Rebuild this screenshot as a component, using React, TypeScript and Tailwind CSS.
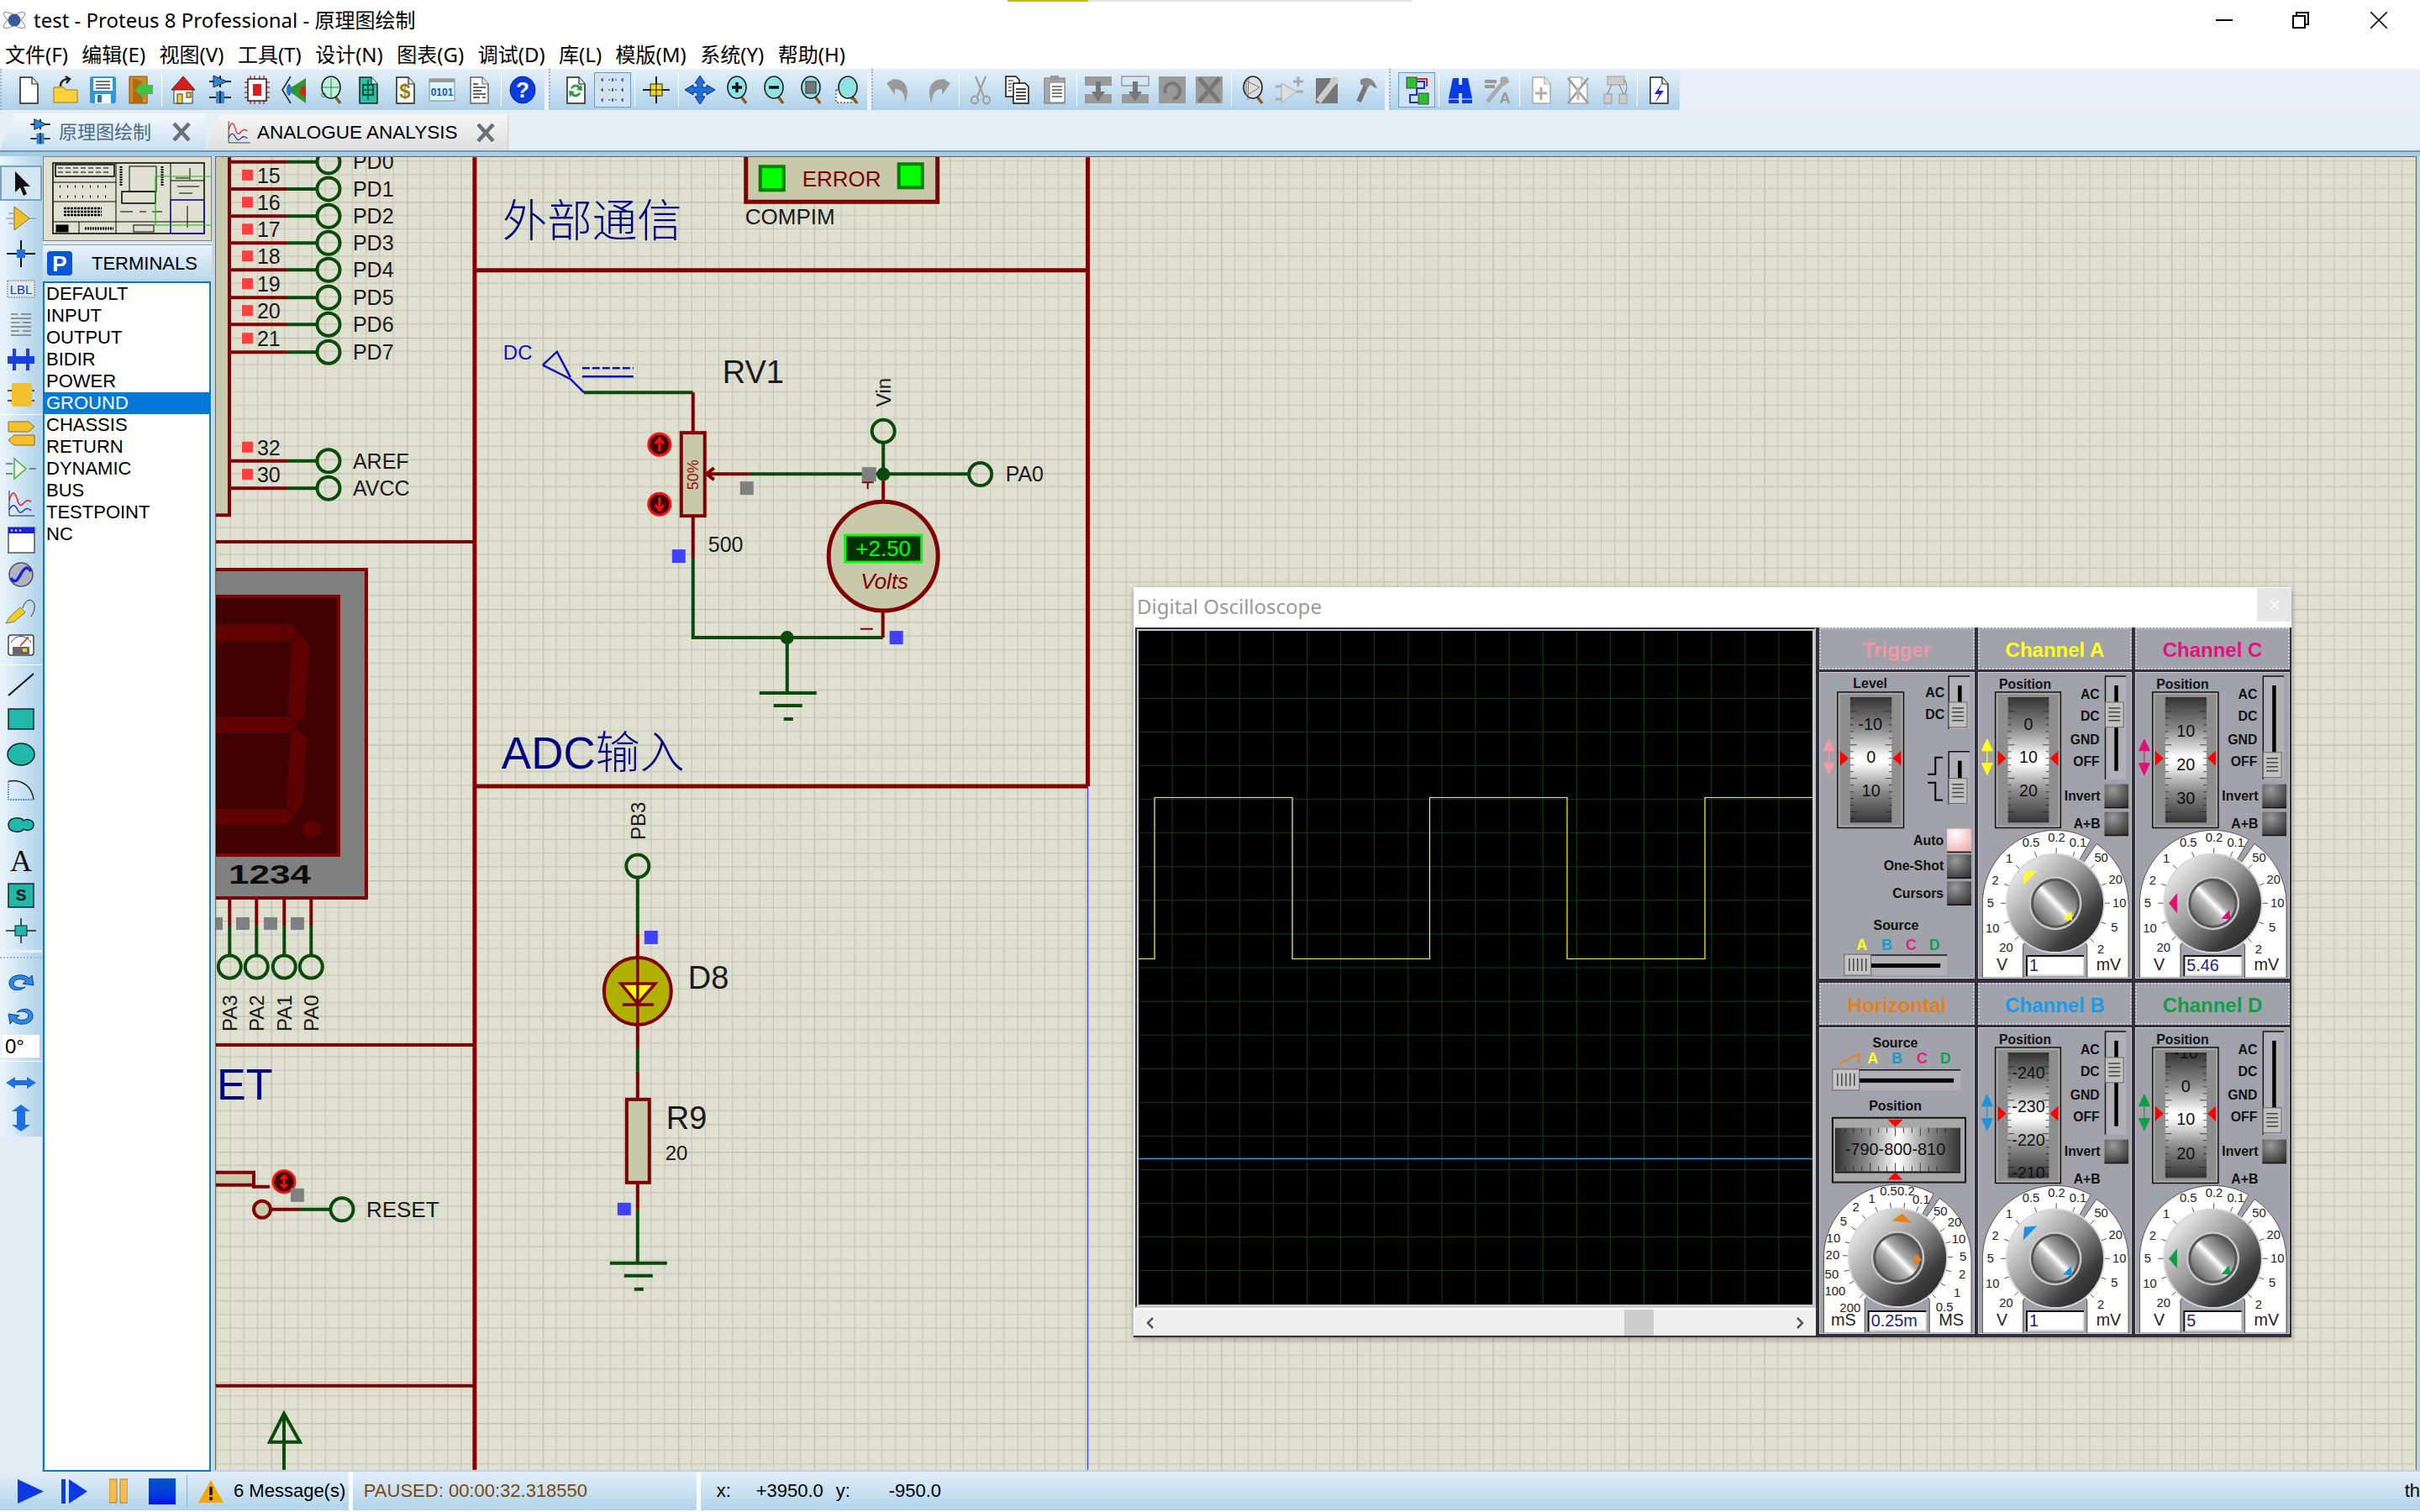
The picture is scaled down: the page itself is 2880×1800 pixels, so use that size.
import type { ReactNode } from "react";

const MAROON = "#800000";
const GREEN = "#0a4a0a";
const NAVY = "#000080";
const BEIGE = "#c8c8aa";

const Doc = ({ children, fill = "#fff", stroke = "#222" }: { children?: ReactNode; fill?: string; stroke?: string }) => (
  <>
    <path d="M10 3h14l7 8v23H10z" fill={fill} stroke={stroke} strokeWidth="1.5" />
    <path d="M24 3v8h7" fill="#e8e8e8" stroke={stroke} strokeWidth="1.2" />
    {children}
  </>
);

const Mag = ({ children, fill = "#8fe3e3" }: { children?: ReactNode; fill?: string }) => (
  <>
    <path d="M25 26l6 8" stroke="#8a5a20" strokeWidth="3.5" />
    <ellipse cx="20" cy="15" rx="11" ry="13" fill={fill} stroke="#222" strokeWidth="1.6" />
    {children}
  </>
);

const gray = "#9a9a9a";

const toolIcons: Record<string, ReactNode> = {
  new: <Doc />,
  open: (
    <>
      <path d="M6 15h12l2 3h14v15H6z" fill="#ffd23c" stroke="#a07a10" />
      <path d="M14 14c0-6 4-9 9-9M20 2l5 3-4 5" fill="none" stroke="#222" strokeWidth="2.5" />
    </>
  ),
  save: (
    <>
      <rect x="5" y="2" width="31" height="32" rx="3" fill="#2f97dd" />
      <rect x="9" y="4" width="23" height="15" fill="#fff" />
      <path d="M12 8h17M12 12h17M12 16h17" stroke="#444" strokeWidth="1.5" />
      <rect x="11" y="23" width="19" height="11" fill="#fff" />
      <rect x="14" y="24" width="5" height="9" fill="#2f6fb5" />
    </>
  ),
  exit: (
    <>
      <path d="M8 2h21v32H8z" fill="#d98a1e" stroke="#7a4a10" />
      <path d="M12 4l12 4v26H12z" fill="#b06a10" />
      <path d="M36 12v11H26v6L15 18l11-11v5z" fill="#3fc24a" />
    </>
  ),
  home: (
    <>
      <rect x="9" y="17" width="22" height="17" fill="#fff" stroke="#333" />
      <path d="M20 2l14 16H6z" fill="#d42020" stroke="#701010" />
      <rect x="13" y="23" width="6" height="11" fill="#e8d040" stroke="#333" />
      <rect x="24" y="21" width="5" height="6" fill="#e8d040" stroke="#333" />
    </>
  ),
  schem: (
    <>
      <path d="M20 1v14M7 8h26" stroke="#222" strokeWidth="2" />
      <path d="M12 1l16 7-16 7z" fill="#2f87d5" stroke="#124" />
      <path d="M7 27h26M20 19v15" stroke="#222" strokeWidth="2" />
      <rect x="15" y="20" width="4" height="14" fill="#2f87d5" />
      <rect x="21" y="20" width="4" height="14" fill="#2f87d5" />
    </>
  ),
  chip: (
    <>
      <path d="M12 1v34M17 1v34M23 1v34M28 1v34M5 9h30M5 15h30M5 21h30M5 27h30" stroke="#d03030" strokeWidth="1.5" />
      <rect x="9" y="5" width="22" height="26" fill="#fff" stroke="#222" strokeWidth="1.5" />
      <rect x="15" y="11" width="10" height="14" fill="#d81e1e" />
    </>
  ),
  view3d: (
    <>
      <path d="M16 2L6 18l10 16" fill="none" stroke="#222" strokeWidth="1.5" />
      <path d="M34 4L12 18l22 16z" fill="#2a9a30" />
      <path d="M29 14l5-1v14l-8-4z" fill="#d82020" />
      <ellipse cx="14" cy="18" rx="3" ry="7" fill="#2f77c5" />
    </>
  ),
  gerber: (
    <Mag fill="#bfeeda">
      <path d="M10 15h20M20 4v24" stroke="#2a8a50" />
      <circle cx="11" cy="24" r="2.5" fill="none" stroke="#2a8a50" />
    </Mag>
  ),
  pcb: (
    <Doc fill="#2cc0a0">
      <rect x="14" y="12" width="12" height="12" fill="none" stroke="#0a5040" strokeWidth="2" />
      <path d="M20 6v24M14 18h12" stroke="#0a5040" strokeWidth="1.5" />
    </Doc>
  ),
  dollar: (
    <Doc>
      <text x="20" y="28" textAnchor="middle" fontSize="24" fontWeight="700" fill="#8a8a10">$</text>
    </Doc>
  ),
  binary: (
    <>
      <rect x="5" y="5" width="30" height="26" fill="#d8f8f8" stroke="#888" />
      <rect x="5" y="5" width="30" height="4" fill="#999" />
      <text x="20" y="25" textAnchor="middle" fontSize="12" fontWeight="700" fill="#1a50c0">0101</text>
    </>
  ),
  report: (
    <Doc stroke="#666">
      <path d="M13 11h6M13 15h15M13 19h10M13 23h15M13 27h8M24 27h4" stroke="#333" strokeWidth="1.5" />
    </Doc>
  ),
  help: (
    <>
      <ellipse cx="20" cy="18" rx="15" ry="16" fill="#0a3ae0" stroke="#061e90" />
      <text x="20" y="27" textAnchor="middle" fontSize="26" fontWeight="700" fill="#fff">?</text>
    </>
  ),
  refresh: (
    <Doc>
      <path d="M14 16c2-5 8-6 11-2l2-3 1 8-7-1 2-2c-2-2-5-2-7 1z" fill="#2a9a40" />
      <path d="M26 22c-2 5-8 6-11 2l-2 3-1-8 7 1-2 2c2 2 5 2 7-1z" fill="#2a9a40" />
    </Doc>
  ),
  grid: (
    <g stroke="#333" strokeWidth="1.2">
      <path d="M6 6h4M15 6h10M30 6h4M6 18h4M15 18h10M30 18h4M6 30h4M15 30h10M30 30h4" strokeDasharray="2 2" />
      <path d="M8 4v4M20 4v4M32 4v4M8 16v4M20 16v4M32 16v4M8 28v4M20 28v4M32 28v4" />
    </g>
  ),
  origin: (
    <>
      <path d="M4 18h32M20 2v32" stroke="#222" strokeWidth="2" />
      <rect x="13" y="11" width="14" height="14" fill="#f2d820" stroke="#222" />
      <path d="M20 11v14M13 18h14" stroke="#222" />
    </>
  ),
  pan: (
    <path d="M20 1l6 9h-3v5h5v-3l10 6-10 6v-3h-5v5h3l-6 9-6-9h3v-5h-5v3L2 18l10-6v3h5v-5h-3z" fill="#1f6fe0" stroke="#0a2a70" />
  ),
  zoomin: <Mag><path d="M14 15h12M20 9v12" stroke="#111" strokeWidth="3.5" /></Mag>,
  zoomout: <Mag><path d="M14 15h12" stroke="#111" strokeWidth="3.5" /></Mag>,
  zoomarea: <Mag><rect x="14" y="8" width="12" height="14" fill="#777" stroke="#333" /></Mag>,
  zoomfit: (
    <>
      <rect x="6" y="18" width="18" height="15" fill="#fff" stroke="#222" strokeDasharray="2 2" />
      <Mag />
    </>
  ),
  undo: <path d="M10 6c14-3 24 8 16 28 0-12-4-17-12-17v7L4 10l10-6z" fill={gray} />,
  redo: <path d="M30 6C16 3 6 14 14 34c0-12 4-17 12-17v7l10-14-10-6z" fill={gray} />,
  cut: (
    <g fill="none" stroke={gray} strokeWidth="2">
      <path d="M14 2l10 24M26 2L16 26" />
      <ellipse cx="13" cy="30" rx="4" ry="4.5" />
      <ellipse cx="27" cy="30" rx="4" ry="4.5" />
    </g>
  ),
  copy: (
    <>
      <path d="M6 2h12l4 4v20H6z" fill="#fff" stroke="#111" strokeWidth="1.5" />
      <path d="M15 10h14l4 4v20H15z" fill="#fff" stroke="#111" strokeWidth="1.5" />
      <path d="M18 17h12M18 21h12M18 25h12M18 29h12" stroke="#111" strokeWidth="1.5" />
      <path d="M9 7h6M9 11h4M9 15h4M9 19h4" stroke="#111" />
    </>
  ),
  paste: (
    <>
      <rect x="8" y="4" width="24" height="30" fill="#aaa" stroke="#777" />
      <rect x="15" y="1" width="10" height="6" fill="#999" />
      <path d="M14 9h18v24H14z" fill="#fff" stroke="#777" />
      <path d="M17 14h12M17 18h12M17 22h12M17 26h12" stroke="#555" strokeWidth="1.5" />
    </>
  ),
  blockcopy: (
    <>
      <rect x="4" y="2" width="32" height="11" fill={gray} />
      <rect x="4" y="23" width="32" height="11" fill={gray} />
      <path d="M17 8h6v12h5l-8 12-8-12h5z" fill="#777" />
    </>
  ),
  blockmove: (
    <>
      <rect x="4" y="2" width="32" height="11" fill="none" stroke={gray} strokeWidth="1.5" />
      <rect x="4" y="23" width="32" height="11" fill={gray} />
      <path d="M17 8h6v12h5l-8 12-8-12h5z" fill="#777" />
    </>
  ),
  blockrot: (
    <>
      <rect x="4" y="2" width="32" height="32" fill={gray} />
      <path d="M12 22c-4-14 16-16 17-3 0 6-4 9-8 10" fill="none" stroke="#777" strokeWidth="4" />
    </>
  ),
  blockdel: (
    <>
      <rect x="4" y="2" width="32" height="32" fill={gray} />
      <path d="M8 4l24 28M32 4L8 32" stroke="#777" strokeWidth="5" />
    </>
  ),
  pick: (
    <Mag fill="#ddd">
      <path d="M12 7l16 8-16 10zM15 4l-1 26" fill="none" stroke="#777" />
    </Mag>
  ),
  makedev: (
    <>
      <path d="M10 10l18 10-18 13z" fill="#ddd" stroke="#aaa" />
      <path d="M3 14h7M3 29h7M28 20h8M30 2v12M24 8h12" stroke="#aaa" strokeWidth="3" />
    </>
  ),
  pack: (
    <>
      <rect x="7" y="4" width="26" height="30" fill="#777" />
      <path d="M10 32L30 6" stroke="#ccc" strokeWidth="7" />
      <circle cx="29" cy="7" r="5" fill="#ccc" />
    </>
  ),
  hammer: (
    <>
      <path d="M14 32L24 10" stroke="#777" strokeWidth="6" />
      <path d="M16 6c8-5 16-2 20 10l-4-1-4-3-4 4-8-5z" fill="#888" />
    </>
  ),
  wire: (
    <>
      <path d="M14 8h15v8h-9v8h-8v9h14" fill="none" stroke="#1a30d0" strokeWidth="2" />
      <path d="M20 5h12v9" fill="none" stroke="#e02020" strokeWidth="2" />
      <rect x="8" y="3" width="12" height="13" fill="#2cc030" stroke="#444" />
      <rect x="22" y="22" width="12" height="13" fill="#2cc030" stroke="#444" />
    </>
  ),
  search: (
    <>
      <path d="M11 4h7v8h4V4h7l5 24v6H22V22h-4v12H6v-6z" fill="#0a3ae0" />
      <path d="M6 29h12M22 29h12" stroke="#fff" />
    </>
  ),
  prop: (
    <>
      <path d="M5 8h14M5 14h12" stroke="#999" strokeWidth="4" />
      <path d="M8 32L28 8" stroke="#aaa" strokeWidth="5" />
      <path d="M24 3c6-2 10 0 10 6l-6 4-5-5z" fill="#aaa" />
      <text x="29" y="34" textAnchor="middle" fontSize="18" fontWeight="700" fill="#999">A</text>
    </>
  ),
  newsheet: (
    <Doc fill="#fff" stroke="#aaa">
      <path d="M20 15v15M13 22h14" stroke="#aaa" strokeWidth="3" />
    </Doc>
  ),
  delsheet: (
    <Doc fill="#fff" stroke="#aaa">
      <path d="M8 4l24 30M32 4L8 34" stroke="#999" strokeWidth="2.5" />
      <path d="M20 15v15" stroke="#bbb" strokeWidth="3" />
    </Doc>
  ),
  parent: (
    <>
      <rect x="11" y="2" width="20" height="10" fill="#ccc" stroke="#999" />
      <rect x="7" y="23" width="9" height="11" fill="#ccc" stroke="#999" />
      <rect x="25" y="23" width="9" height="11" fill="#ccc" stroke="#999" />
      <path d="M16 12l-5 11M25 12l5 11M31 6c4 5 4 12 0 17" fill="none" stroke="#777" />
    </>
  ),
  netlist: (
    <Doc>
      <path d="M24 10l-9 13h6l-6 11 11-15h-6z" fill="#1a20e0" />
    </Doc>
  ),
};

const railIcons: Record<string, ReactNode> = {
  select: <path d="M13 4v25l6-6 4 10 4-2-4-9h8z" fill="#111" />,
  comp: (
    <>
      <path d="M2 18h10M28 18h10M5 12h9M5 24h9" stroke="#888" />
      <path d="M12 4l18 14-18 14z" fill="#f2c030" stroke="#8a7010" />
    </>
  ),
  junction: (
    <>
      <path d="M3 18h34M20 2v32" stroke="#111" strokeWidth="2" />
      <rect x="15" y="13" width="10" height="10" fill="#1f6fe0" />
    </>
  ),
  lbl: (
    <>
      <rect x="4" y="8" width="32" height="20" fill="#e0e8f0" stroke="#777" strokeDasharray="2 1" />
      <text x="20" y="24" textAnchor="middle" fontSize="15" fill="#1a30c0">LBL</text>
    </>
  ),
  textblock: <path d="M8 6h8M20 6h12M8 11h24M8 16h10M22 16h10M8 21h24M8 26h10M22 26h10M8 31h24" stroke="#777" strokeWidth="1.5" />,
  bus: (
    <>
      <rect x="4" y="14" width="32" height="9" fill="#1a40e0" />
      <path d="M12 5v26M28 5v26" stroke="#1a40e0" strokeWidth="4" />
    </>
  ),
  sub: (
    <>
      <path d="M4 13h32M4 25h32" stroke="#775510" strokeWidth="2" />
      <rect x="9" y="4" width="24" height="28" rx="3" fill="#f2c030" />
    </>
  ),
  term: (
    <>
      <path d="M5 4h24l7 6-7 6H5z" fill="#f2c030" stroke="#8a7010" />
      <path d="M36 20H12l-7 6 7 6h24z" fill="#f2c030" stroke="#8a7010" />
    </>
  ),
  pins: (
    <>
      <path d="M12 6l14 12-14 12z" fill="#e8f4e8" stroke="#40b040" strokeWidth="1.5" />
      <path d="M2 12h8M2 24h8M30 18h8" stroke="#666" strokeWidth="1.5" />
    </>
  ),
  graph: (
    <>
      <path d="M6 2v30h30" fill="none" stroke="#222" />
      <path d="M6 14c4-14 7-10 10 0s6 4 8 2 6-4 8 0" fill="none" stroke="#e02020" strokeWidth="1.5" />
      <path d="M6 25c4-8 7-6 10 0s6 2 8 0 6-2 8 1" fill="none" stroke="#1a30e0" strokeWidth="1.5" />
    </>
  ),
  tape: (
    <>
      <rect x="5" y="4" width="31" height="30" fill="#fff" stroke="#555" strokeWidth="1.5" />
      <rect x="5" y="4" width="31" height="7" fill="#1a20e0" />
      <path d="M8 7.5h2M13 7.5h2M18 7.5h2" stroke="#fff" strokeWidth="2" />
    </>
  ),
  gen: (
    <>
      <circle cx="20" cy="18" r="14" fill="#b0b4c0" stroke="#555" strokeWidth="1.5" />
      <path d="M8 22c5 8 8 2 12-5s7-10 12-3" fill="none" stroke="#1a20e0" strokeWidth="3.5" />
    </>
  ),
  probe: (
    <>
      <path d="M2 34l5-8 12-11 6 6-13 11z" fill="#f2d020" stroke="#775" />
      <path d="M22 16c2-8 8-12 12-8s2 12-2 18" fill="none" stroke="#333" />
    </>
  ),
  meter: (
    <>
      <rect x="5" y="6" width="30" height="24" rx="3" fill="#fff" stroke="#444" strokeWidth="1.5" />
      <path d="M8 15c6-10 18-10 24 0" fill="none" stroke="#1a30e0" />
      <path d="M19 19L29 8" stroke="#e02020" strokeWidth="1.5" />
      <rect x="10" y="20" width="20" height="9" fill="#666" />
      <rect x="22" y="22" width="5" height="4" fill="#f2d020" />
    </>
  ),
  line: <path d="M5 32L35 6" stroke="#111" strokeWidth="2" />,
  box: <rect x="5" y="6" width="30" height="24" fill="#20b8a8" stroke="#123" strokeWidth="1.5" />,
  circle: <ellipse cx="20" cy="18" rx="16" ry="13" fill="#20b8a8" stroke="#123" strokeWidth="1.5" />,
  arc: (
    <>
      <path d="M5 8c16-3 28 6 30 22" fill="none" stroke="#222" strokeWidth="1.5" />
      <path d="M5 8v22h30" fill="none" stroke="#2030d0" strokeDasharray="2 1" />
    </>
  ),
  path: (
    <path d="M5 18c0-10 16-10 18-5 4-3 12-1 12 5s-8 8-12 5c-2 5-18 5-18-5z" fill="#20b8a8" stroke="#123" strokeWidth="1.5" />
  ),
  text: <text x="20" y="31" textAnchor="middle" fontSize="36" fontFamily="Liberation Serif" fill="#111">A</text>,
  symbol: (
    <>
      <rect x="5" y="4" width="30" height="28" fill="#20b8a8" stroke="#123" strokeWidth="1.5" />
      <text x="20" y="24" textAnchor="middle" fontSize="19" fontWeight="700" fill="#111">S</text>
    </>
  ),
  marker: (
    <>
      <path d="M2 18h36M20 3v30" stroke="#222" strokeWidth="1.5" />
      <rect x="13" y="12" width="14" height="12" fill="#20b8a8" stroke="#123" />
    </>
  ),
  rotcw: <path d="M6 19c0-10 18-12 24-5l3-4 2 12-13-2 4-3c-5-4-14-3-15 3 1 5 8 6 14 4-7 6-19 5-19-5z" fill="#2f8ae0" stroke="#0a3a90" />,
  rotccw: <path d="M34 17c0 10-18 12-24 5l-3 4-2-12 13 2-4 3c5 4 14 3 15-3-1-5-8-6-14-4 7-6 19-5 19 5z" fill="#2f8ae0" stroke="#0a3a90" />,
  fliph: <path d="M2 18l11-7v4h14v-4l11 7-11 7v-4H13v4z" fill="#1f6fe0" />,
  flipv: <path d="M20 2l11 8h-6v16h6l-11 8-11-8h6V10H9z" fill="#1f6fe0" />,
};

const Icon = ({ name, set = toolIcons }: { name: string; set?: Record<string, ReactNode> }) => (
  <svg width="40" height="36" viewBox="0 0 40 36" className="block font-['Liberation_Sans']">
    {set[name]}
  </svg>
);

const Sep = () => (
  <div className="w-[8px] h-[40px] flex justify-center">
    <div className="w-[1px] h-full bg-[#8fb3cc] border-r border-white" />
  </div>
);

const Tool = ({ name, on }: { name: string; on?: boolean }) => (
  <div
    className={`w-[44px] h-[42px] flex items-center justify-center ${
      on ? "bg-[#cfe3f2] border border-[#6f9dc0]" : ""
    }`}
  >
    <Icon name={name} />
  </div>
);

const ToolGroup = ({ items, pad, w }: { items: string[]; pad: string; w: string }) => (
  <div
    className={`${pad} ${w} h-full flex items-center bg-gradient-to-b from-[#e4f1fa] to-[#aed0e8] border-l-2 border-dotted border-[#9bb8cc]`}
  >
    {items.map((it, i) =>
      it === "|" ? <Sep key={i} /> : <Tool key={i} name={it.replace("*", "")} on={it.endsWith("*")} />
    )}
  </div>
);

const Toolbar = () => (
  <div className="h-[49px] flex gap-[5px] bg-[#eaf1f9]">
    <ToolGroup
      pad="pl-[10px]"
      w="w-[648px]"
      items={["new", "open", "save", "exit", "|", "home", "schem", "chip", "view3d", "gerber", "pcb", "dollar", "binary", "report", "|", "help"]}
    />
    <ToolGroup
      pad="pl-[8px]"
      w="w-[379px]"
      items={["refresh", "grid*", "|", "origin", "|", "pan", "zoomin", "zoomout", "zoomarea", "zoomfit"]}
    />
    <ToolGroup
      pad="pl-[10px]"
      w="w-[611px]"
      items={["undo", "redo", "|", "cut", "copy", "paste", "|", "blockcopy", "blockmove", "blockrot", "blockdel", "|", "pick", "makedev", "pack", "hammer"]}
    />
    <ToolGroup
      pad="pl-[9px]"
      w="w-[346px]"
      items={["wire*", "|", "search", "prop", "|", "newsheet", "delsheet", "parent", "|", "netlist"]}
    />
  </div>
);

const menus = ["文件(F)", "编辑(E)", "视图(V)", "工具(T)", "设计(N)", "图表(G)", "调试(D)", "库(L)", "模版(M)", "系统(Y)", "帮助(H)"];

const TitleBar = () => (
  <div className="relative h-[47px] flex items-center bg-white">
    <div className="absolute left-[1199px] top-0 w-[482px] h-[2px] bg-[#e3e3e3]">
      <div className="w-[96px] h-full bg-[#c8b820]" />
    </div>
    <svg width="30" height="24" viewBox="0 0 30 24" className="ml-[2px] mt-[1px]">
      <ellipse cx="15" cy="12" rx="15" ry="5" transform="rotate(35 15 12)" fill="none" stroke="#889" />
      <ellipse cx="15" cy="12" rx="15" ry="5" transform="rotate(-35 15 12)" fill="none" stroke="#889" />
      <circle cx="15" cy="12" r="7.5" fill="#3a5a9a" />
    </svg>
    <span className="ml-[8px] text-[24px] leading-none text-black">test - Proteus 8 Professional - 原理图绘制</span>
    <div className="ml-auto mr-[39px] flex items-center">
      <svg width="20" height="20" viewBox="0 0 20 20"><path d="M0 10h20" stroke="#000" strokeWidth="2" /></svg>
      <svg width="20" height="20" viewBox="0 0 20 20" className="ml-[71px]">
        <rect x="1" y="5" width="14" height="14" fill="none" stroke="#000" strokeWidth="2" />
        <path d="M5 5V1h14v14h-4" fill="none" stroke="#000" strokeWidth="2" />
      </svg>
      <svg width="20" height="20" viewBox="0 0 20 20" className="ml-[73px]">
        <path d="M0 0l20 20M20 0L0 20" stroke="#111" strokeWidth="1.6" />
      </svg>
    </div>
  </div>
);

const MenuBar = () => (
  <div className="h-[35px] flex items-center gap-[16.5px] pl-[6px] bg-white text-[24px] leading-none text-black">
    {menus.map((m) => (
      <span key={m}>{m}</span>
    ))}
  </div>
);

const TabX = () => (
  <svg width="22" height="22" viewBox="0 0 22 22">
    <path d="M2 1l18 20M20 1L2 21" stroke="#6a6f78" strokeWidth="4.5" />
  </svg>
);

const TabBar = () => (
  <div className="h-[48px] flex items-end bg-[#e6eef5] font-['Liberation_Sans',_'Noto_Sans_CJK_SC',_sans-serif]">
    <div className="w-[245px] h-[44px] flex items-center bg-gradient-to-b from-[#f4fafe] to-[#c9e0f1] [clip-path:polygon(18px_0,100%_0,100%_100%,0_100%)] pl-[30px]">
      <svg width="36" height="34" viewBox="0 0 40 36">{toolIcons.schem}</svg>
      <span className="ml-[4px] text-[22px] text-[#4a6a85]">原理图绘制</span>
      <span className="ml-[25px]"><TabX /></span>
    </div>
    <div className="w-[360px] h-[42px] flex items-center bg-gradient-to-b from-[#f6f6f6] to-[#dedede] border-r border-[#ccc] [clip-path:polygon(15px_0,100%_0,100%_100%,0_100%)] pl-[22px]">
      <svg width="34" height="34" viewBox="0 0 40 36">{railIcons.graph}</svg>
      <span className="ml-[5px] text-[22.5px] text-black whitespace-nowrap">ANALOGUE ANALYSIS</span>
      <span className="ml-[23px]"><TabX /></span>
    </div>
  </div>
);

const RailItem = ({ name, on }: { name: string; on?: boolean }) => (
  <div className={`w-[50px] h-[42px] flex items-center justify-center ${on ? "bg-[#d3e6f4] border-2 border-[#7aa4c4]" : ""}`}>
    <Icon name={name} set={railIcons} />
  </div>
);

const LeftRail = () => (
  <div className="w-[50px] bg-[#e3ebf3]">
    <div className="h-[1167px] pt-[11px] bg-gradient-to-r from-[#eaf5fc] to-[#b0d2e9] font-['Liberation_Sans']">
      {["select", "comp", "junction", "lbl", "textblock", "bus", "sub"].map((n, i) => (
        <RailItem key={n} name={n} on={i === 0} />
      ))}
      <div className="h-[4px] flex items-center"><div className="w-full h-[1px] bg-white" /></div>
      {["term", "pins", "graph", "tape", "gen", "probe", "meter"].map((n) => (
        <RailItem key={n} name={n} />
      ))}
      <div className="h-[4px] flex items-center"><div className="w-full h-[1px] bg-white" /></div>
      {["line", "box", "circle", "arc", "path", "text", "symbol", "marker"].map((n) => (
        <RailItem key={n} name={n} />
      ))}
      <div className="h-[19px] flex flex-col justify-start pt-[2px] gap-[5px]">
        <div className="w-full h-[3px] bg-[#e8f2f9]" />
        <div className="w-full border-t-2 border-dotted border-[#a0b8c8]" />
      </div>
      <RailItem name="rotcw" />
      <RailItem name="rotccw" />
      <div className="mx-[3px] h-[27px] bg-white text-[24px] leading-[27px] pl-[3px] text-black">0°</div>
      <div className="h-[9px] flex items-center"><div className="w-full h-[1px] bg-white" /></div>
      <RailItem name="fliph" />
      <RailItem name="flipv" />
    </div>
  </div>
);

const terminals = ["DEFAULT", "INPUT", "OUTPUT", "BIDIR", "POWER", "GROUND", "CHASSIS", "RETURN", "DYNAMIC", "BUS", "TESTPOINT", "NC"];

const Preview = () => (
  <div className="h-[101px] border border-[#808080] bg-[#dfe0cf]">
    <svg width="199" height="99" viewBox="51 187 199 99" className="block">
      <g fill="none" stroke="#000" strokeWidth="1">
        <rect x="62" y="194" width="180" height="84" strokeWidth="1.5" />
        <path d="M137 194v84M202 194v84M62 217h75M62 240h75M62 264h180M202 215h40M202 238h40M93 264v14" />
        <rect x="65" y="196" width="70" height="14" strokeWidth="1.5" />
        <rect x="153" y="198" width="32" height="30" />
        <rect x="144" y="228" width="40" height="14" strokeWidth="1.5" />
        <path d="M68 200h60M68 205h60" strokeDasharray="6 3" />
        <path d="M70 222h55M70 234h55" strokeDasharray="1 8" strokeWidth="3" />
        <path d="M75 248h45M75 252h45M75 256h45" strokeWidth="2.5" strokeDasharray="3 1" />
        <rect x="66" y="268" width="14" height="8" fill="#000" />
        <rect x="158" y="268" width="24" height="8" />
        <path d="M100 272h34" strokeWidth="3" strokeDasharray="2 1" />
        <path d="M143 198v24M192 198v24" strokeWidth="3" strokeDasharray="2 1" />
        <path d="M142 252h15M165 252h8M180 252h12" />
        <path d="M208 212h16M225 200v14M210 222h26M212 230h16M222 245v26" />
      </g>
      <rect x="202" y="238" width="40" height="40" fill="none" stroke="#1010c0" strokeWidth="1.2" />
      <path d="M252 210H184v58h68" fill="none" stroke="#10c010" strokeWidth="1.2" />
    </svg>
  </div>
);

const Gallery = () => (
  <div className="w-[201px] ml-[1px] flex flex-col bg-[#e3ebf3] font-['Liberation_Sans']">
    <Preview />
    <div className="mt-[4px] h-[44px] flex items-center bg-gradient-to-b from-[#e8f3fb] to-[#b9d7ec] border-t border-[#8a9aa8]">
      <div className="ml-[5px] w-[30px] h-[29px] rounded-[4px] bg-[#0a55d8] flex items-center justify-center text-white text-[26px] font-bold leading-none">P</div>
      <span className="ml-[23px] text-[22px] text-black leading-none">TERMINALS</span>
    </div>
    <div className="flex-1 bg-white border-2 border-[#0078d7] border-r-[2px] mr-[1px]">
      {terminals.map((t) => (
        <div
          key={t}
          className={`h-[26px] pl-[2px] text-[22px] leading-[26px] ${t === "GROUND" ? "bg-[#0078d7] text-white" : "text-black"}`}
        >
          {t}
        </div>
      ))}
    </div>
  </div>
);

const Pin = ({ y, label, num }: { y: number; label: string; num: string }) => (
  <g>
    <path d={`M275 ${y}H341`} stroke={MAROON} strokeWidth="4" />
    <path d={`M341 ${y}H377`} stroke={GREEN} strokeWidth="4" />
    <circle cx="391" cy={y} r="13.5" fill="none" stroke={GREEN} strokeWidth="4" />
    <rect x="288" y={y - 23} width="13" height="13" fill="#ff4040" />
    <text x="306" y={y - 7} fontSize="25" fill="#1a1a1a">{num}</text>
    <text x="420" y={y + 9} fontSize="25" fill="#1a1a1a">{label}</text>
  </g>
);

const GraySq = ({ x, y, w = 16, h = 16 }: { x: number; y: number; w?: number; h?: number }) => (
  <rect x={x} y={y} width={w} height={h} fill="#808080" />
);

const BlueSq = ({ x, y }: { x: number; y: number }) => <rect x={x} y={y} width="16" height="16" fill="#4040ff" />;

const Ground = ({ x, y, w = 34 }: { x: number; y: number; w?: number }) => (
  <path
    d={`M${x - w} ${y}H${x + w}M${x - w / 2} ${y + 15}H${x + w / 2}M${x - 5} ${y + 31}H${x + 6}`}
    stroke={GREEN}
    strokeWidth="4"
  />
);

const Indicator = ({ x, y, dir }: { x: number; y: number; dir: "up" | "down" | "both" }) => (
  <g>
    <circle cx={x} cy={y} r="13" fill="#400000" stroke="#ff1010" strokeWidth="3" />
    {dir === "up" && <path d={`M${x} ${y + 8}V${y - 6}M${x - 5} ${y - 1}l5-6 5 6`} stroke="#ff1010" strokeWidth="3" fill="none" />}
    {dir === "down" && <path d={`M${x} ${y - 8}V${y + 6}M${x - 5} ${y + 1}l5 6 5-6`} stroke="#ff1010" strokeWidth="3" fill="none" />}
    {dir === "both" && <path d={`M${x} ${y - 7}V${y + 7}M${x - 4} ${y - 3}l4-4 4 4M${x - 4} ${y + 3}l4 4 4-4`} stroke="#ff1010" strokeWidth="2.5" fill="none" />}
  </g>
);

const pinRows = [
  { y: 224.6, label: "PD1", num: "15" },
  { y: 257, label: "PD2", num: "16" },
  { y: 289, label: "PD3", num: "17" },
  { y: 321, label: "PD4", num: "18" },
  { y: 354, label: "PD5", num: "19" },
  { y: 386, label: "PD6", num: "20" },
  { y: 419, label: "PD7", num: "21" },
  { y: 548.6, label: "AREF", num: "32" },
  { y: 581, label: "AVCC", num: "30" },
];

const paPins = [
  { x: 273.3, label: "PA3" },
  { x: 305.3, label: "PA2" },
  { x: 338.3, label: "PA1" },
  { x: 370.3, label: "PA0" },
];

// schematic drawn in page coordinates, the viewBox starts where the canvas starts
const Schematic = () => (
  <svg viewBox="257 187 2619 1563" className="block w-full h-full bg-[#e0e0d0] font-['Liberation_Sans',_'Noto_Sans_CJK_SC',_sans-serif]">
    <defs>
      <pattern id="paper" patternUnits="userSpaceOnUse" x="322.6" y="240" width="161.6" height="161.6">
        <path
          d="M16.16 0v161.6M32.32 0v161.6M48.48 0v161.6M64.64 0v161.6M80.8 0v161.6M96.96 0v161.6M113.12 0v161.6M129.28 0v161.6M145.44 0v161.6M0 16.16h161.6M0 32.32h161.6M0 48.48h161.6M0 64.64h161.6M0 80.8h161.6M0 96.96h161.6M0 113.12h161.6M0 129.28h161.6M0 145.44h161.6"
          stroke="#c6c6b6"
          strokeWidth="1.2"
        />
        <path d="M0 0v161.6M0 0h161.6" stroke="#bcbcac" strokeWidth="2.5" />
      </pattern>
    </defs>
    <rect x="257" y="187" width="2619" height="1563" fill="url(#paper)" />

    {/* MCU */}
    <rect x="257" y="187" width="15" height="426" fill={BEIGE} />
    <path d="M273 187V613H257" fill="none" stroke={MAROON} strokeWidth="4" />
    <path d="M275 192.5H341" stroke={MAROON} strokeWidth="4" />
    <path d="M341 192.5H377" stroke={GREEN} strokeWidth="4" />
    <circle cx="391" cy="192.5" r="13.5" fill="none" stroke={GREEN} strokeWidth="4" />
    <text x="420" y="201" fontSize="25" fill="#1a1a1a">PD0</text>
    {pinRows.map((p) => (
      <Pin key={p.label} {...p} />
    ))}

    {/* frame lines */}
    <path d="M565 187V1750M1295 187V936M565 321.5H1295M565 936H1295" stroke={MAROON} strokeWidth="5" fill="none" />
    <path d="M257 645H565M257 1244H565M257 1650H565" stroke={MAROON} strokeWidth="4" />
    <path d="M1295 936V1750" stroke="#4040c0" strokeWidth="1.2" />

    {/* seven segment display */}
    <rect x="257" y="678" width="179" height="391" fill="#808080" />
    <path d="M257 678H436V1069H257" fill="none" stroke={MAROON} strokeWidth="4" />
    <rect x="257" y="710" width="146" height="308" fill="#400000" />
    <path d="M257 710H403V1018H257" fill="none" stroke={MAROON} strokeWidth="4" />
    <g fill="#600000">
      <path d="M257 743H346L356 753 346 764H257z" />
      <path d="M356 755L368 767 363 852 353 860 343 848 348 767z" />
      <path d="M257 853H345L354 863 345 873H257z" />
      <path d="M353 867L365 879 360 956 350 970 341 958 346 879z" />
      <path d="M257 963H340L350 972 340 982H257z" />
      <ellipse cx="371" cy="987" rx="11" ry="10" />
    </g>
    <text x="272" y="1052" fontSize="31" fontWeight="700" textLength="98" lengthAdjust="spacingAndGlyphs" fill="#0c0c0c">1234</text>
    {paPins.map((p) => (
      <g key={p.label}>
        <path d={`M${p.x} 1069V1102`} stroke={MAROON} strokeWidth="4" />
        <path d={`M${p.x} 1102V1137`} stroke={GREEN} strokeWidth="4" />
        <circle cx={p.x} cy="1151" r="13.5" fill="none" stroke={GREEN} strokeWidth="4" />
        <text transform={`rotate(-90 ${p.x + 9} 1228)`} x={p.x + 9} y="1228" fontSize="24" fill="#1a1a1a">{p.label}</text>
      </g>
    ))}
    <GraySq x={257} y={1092} w={8} h={15} />
    <GraySq x={281} y={1092} h={15} />
    <GraySq x={314} y={1092} h={15} />
    <GraySq x={346} y={1092} h={15} />

    {/* reset */}
    <text x="258" y="1309" fontSize="52" fill={NAVY}>ET</text>
    <rect x="257" y="1396" width="45" height="15" fill={BEIGE} />
    <path d="M257 1396H302V1413H321" fill="none" stroke={MAROON} strokeWidth="4" />
    <path d="M257 1411H302" stroke={MAROON} strokeWidth="4" />
    <circle cx="312" cy="1440" r="10" fill={BEIGE} stroke={MAROON} strokeWidth="4" />
    <path d="M322 1440H357" stroke={MAROON} strokeWidth="4" />
    <path d="M357 1440H393" stroke={GREEN} strokeWidth="4" />
    <circle cx="407" cy="1440" r="13.5" fill="none" stroke={GREEN} strokeWidth="4" />
    <text x="436" y="1449" fontSize="26" fill="#1a1a1a">RESET</text>
    <Indicator x={338} y={1407} dir="both" />
    <GraySq x={346} y={1415} />
    <path d="M338 1750V1683M321 1717L338 1683 357 1717z" fill="none" stroke={GREEN} strokeWidth="4" />

    {/* comms */}
    <text x="598" y="282" fontSize="53.5" fontWeight="300" fill={NAVY}>外部通信</text>
    <rect x="888" y="180" width="228" height="60" fill={BEIGE} stroke={MAROON} strokeWidth="5" />
    <rect x="905" y="198" width="28" height="28" fill="#00ff00" stroke="#008000" strokeWidth="4" />
    <rect x="1070" y="195" width="28" height="28" fill="#00ff00" stroke="#008000" strokeWidth="4" />
    <text x="955" y="222" fontSize="26" fill={MAROON}>ERROR</text>
    <text x="887" y="267" fontSize="26" fill="#1a1a1a">COMPIM</text>

    {/* ADC input */}
    <text x="599" y="428" fontSize="24" fill="#1010c0">DC</text>
    <path d="M646 434.5L663 418.5 679 449M646 434.5L679 451 695 467" fill="none" stroke="#1010c0" strokeWidth="2.5" />
    <path d="M693 438H754" stroke="#1010c0" strokeWidth="2.5" strokeDasharray="9 3" />
    <path d="M693 448H754" stroke="#1010c0" strokeWidth="2.5" />
    <path d="M695 467H825" stroke={GREEN} strokeWidth="4" />
    <path d="M825 467V515M825 614V665" stroke={MAROON} strokeWidth="4" />
    <text x="860" y="456" fontSize="38" fill="#1a1a1a">RV1</text>
    <rect x="811" y="515" width="28" height="99" fill={BEIGE} stroke={MAROON} strokeWidth="4" />
    <text transform="rotate(-90 831 565)" x="831" y="565" fontSize="18" textAnchor="middle" fill="#a01010">50%</text>
    <text x="843" y="657" fontSize="25" fill="#1a1a1a">500</text>
    <Indicator x={785} y={529} dir="up" />
    <Indicator x={785} y={600} dir="down" />
    <path d="M825 665V759H1051" fill="none" stroke={GREEN} strokeWidth="4" />
    <path d="M1051 728V759" stroke={MAROON} strokeWidth="4" />
    <circle cx="937" cy="759" r="8" fill={GREEN} />
    <path d="M937 759V825" stroke={GREEN} strokeWidth="4" />
    <Ground x={938} y={825} />
    <path d="M850 557l-9 7 9 7M841 564H892" fill="none" stroke={MAROON} strokeWidth="4" />
    <path d="M892 564H1153" stroke={GREEN} strokeWidth="4" />
    <GraySq x={881} y={573} />
    <path d="M1051.5 527V564" stroke={GREEN} strokeWidth="4" />
    <path d="M1051.5 572V597" stroke={MAROON} strokeWidth="4" />
    <GraySq x={1026} y={556} w={17} h={17} />
    <circle cx="1051.5" cy="564.4" r="8" fill={GREEN} />
    <circle cx="1051.5" cy="513" r="13.5" fill="none" stroke={GREEN} strokeWidth="4" />
    <text transform="rotate(-90 1060 484)" x="1060" y="484" fontSize="24" fill="#1a1a1a">Vin</text>
    <circle cx="1167" cy="564.4" r="13.5" fill="none" stroke={GREEN} strokeWidth="4" />
    <text x="1197" y="573" fontSize="25" fill="#1a1a1a">PA0</text>
    <circle cx="1051.5" cy="662" r="65" fill={BEIGE} stroke={MAROON} strokeWidth="5" />
    <rect x="1006" y="637" width="91" height="32" fill="#003000" stroke="#00ff00" strokeWidth="3" />
    <text x="1051.5" y="662" fontSize="26" textAnchor="middle" fill="#00ff00">+2.50</text>
    <text x="1053" y="701" fontSize="26" fontStyle="italic" textAnchor="middle" fill={MAROON}>Volts</text>
    <path d="M1026 574H1040M1033 574V582M1024 748.6H1039" stroke={MAROON} strokeWidth="2" />
    <BlueSq x={800} y={654} />
    <BlueSq x={1059} y={751} />
    <text x="597" y="915" fontSize="53" fontWeight="300" fill={NAVY}>ADC输入</text>

    {/* LED branch */}
    <circle cx="759" cy="1031" r="13.5" fill="none" stroke={GREEN} strokeWidth="4" />
    <text transform="rotate(-90 768 1000)" x="768" y="1000" fontSize="24" fill="#1a1a1a">PB3</text>
    <path d="M759 1045V1112" stroke={GREEN} strokeWidth="4" />
    <path d="M759 1112V1140M759 1221V1248M759 1276V1309" stroke={MAROON} strokeWidth="4" />
    <path d="M759 1248V1276" stroke={GREEN} strokeWidth="4" />
    <BlueSq x={767} y={1108} />
    <circle cx="759" cy="1180" r="40" fill="#b0b000" stroke={MAROON} strokeWidth="4" />
    <path d="M739 1171H780L759 1195z" fill="#ffff00" stroke={MAROON} strokeWidth="3.5" />
    <path d="M741 1196H778M759 1140V1221" stroke={MAROON} strokeWidth="3.5" />
    <text x="819" y="1177" fontSize="38" fill="#1a1a1a">D8</text>
    <rect x="746" y="1309" width="27" height="99" fill={BEIGE} stroke={MAROON} strokeWidth="4" />
    <text x="793" y="1344" fontSize="38" fill="#1a1a1a">R9</text>
    <text x="792" y="1381" fontSize="24" fill="#1a1a1a">20</text>
    <path d="M759 1408V1440" stroke={MAROON} strokeWidth="4" />
    <path d="M759 1440V1504" stroke={GREEN} strokeWidth="4" />
    <rect x="735" y="1432" width="16" height="15" fill="#4040ff" />
    <Ground x={760} y={1504} />
  </svg>
);

const GlobalDefs = () => (
  <svg className="absolute w-0 h-0">
    <defs>
      <linearGradient id="drum" x1="0" y1="0" x2="0" y2="1">
        <stop offset="0" stopColor="#333" />
        <stop offset="0.25" stopColor="#8a8a8a" />
        <stop offset="0.48" stopColor="#fff" />
        <stop offset="0.52" stopColor="#fff" />
        <stop offset="0.75" stopColor="#8a8a8a" />
        <stop offset="1" stopColor="#333" />
      </linearGradient>
      <linearGradient id="drumh" x1="0" y1="0" x2="1" y2="0">
        <stop offset="0" stopColor="#333" />
        <stop offset="0.25" stopColor="#8a8a8a" />
        <stop offset="0.5" stopColor="#fff" />
        <stop offset="0.75" stopColor="#8a8a8a" />
        <stop offset="1" stopColor="#333" />
      </linearGradient>
      <linearGradient id="knob" x1="0.1" y1="0.1" x2="0.9" y2="0.9">
        <stop offset="0" stopColor="#f0f0f0" />
        <stop offset="0.45" stopColor="#9a9a9a" />
        <stop offset="0.8" stopColor="#3c3c3c" />
        <stop offset="1" stopColor="#2a2a2a" />
      </linearGradient>
      <linearGradient id="cap" x1="0.1" y1="0.9" x2="0.9" y2="0.1">
        <stop offset="0" stopColor="#555" />
        <stop offset="0.4" stopColor="#bbb" />
        <stop offset="0.5" stopColor="#fff" />
        <stop offset="0.6" stopColor="#aaa" />
        <stop offset="1" stopColor="#444" />
      </linearGradient>
      <radialGradient id="btn" cx="0.35" cy="0.25" r="0.9">
        <stop offset="0" stopColor="#9a9a9a" />
        <stop offset="1" stopColor="#2e2e2e" />
      </radialGradient>
      <radialGradient id="btnon" cx="0.35" cy="0.25" r="0.9">
        <stop offset="0" stopColor="#fff" />
        <stop offset="1" stopColor="#f0a8a8" />
      </radialGradient>
    </defs>
  </svg>
);

type Lab = [string, number, number];

const Drum = ({ id, x, y, labels, size = 20 }: { id: string; x: number; y: number; labels: Lab[]; size?: number }) => {
  const ticks = [];
  for (let i = 0; i < 19; i++) ticks.push(y + 7 + i * 8);
  return (
    <g>
      <rect x={x} y={y} width="79" height="162" fill="#a8a8a8" stroke="#111" strokeWidth="1.5" />
      <rect x={x + 3} y={y + 3} width="73" height="156" fill="#8e8e8e" />
      <clipPath id={id}>
        <rect x={x + 15} y={y + 6} width="50" height="150" />
      </clipPath>
      <g clipPath={`url(#${id})`}>
        <rect x={x + 15} y={y + 6} width="50" height="150" fill="url(#drum)" />
        {ticks.map((t, i) => (
          <path key={t} d={`M${x + 15} ${t}h${i % 5 === 2 ? 8 : 4}M${x + 65} ${t}h-${i % 5 === 2 ? 8 : 4}`} stroke="#222" strokeWidth="0.8" />
        ))}
        {labels.map(([t, lx, ly]) => (
          <text key={t + ly} x={lx} y={ly + 7} fontSize={size} textAnchor="middle" fill="#111">{t}</text>
        ))}
      </g>
      <path d={`M${x + 3} ${y + 70}l10 9-10 9zM${x + 76} ${y + 70}l-10 9 10 9z`} fill="#ff0000" />
    </g>
  );
};

const VSwitch = ({ x, y, h, thumb, slotH }: { x: number; y: number; h: number; thumb: number; slotH: number }) => (
  <g>
    <rect x={x} y={y} width="26" height={h} fill="#b0b0b6" />
    <path d={`M${x + 1} ${y + h}V${y + 1}H${x + 26}`} fill="none" stroke="#111" strokeWidth="1.5" />
    <rect x={x + 12} y={y + 12} width="4.5" height={slotH} fill="#000" />
    <rect x={x + 1} y={thumb} width="22" height="30" fill="#c0c0c0" stroke="#666" />
    <path d={`M${x + 5} ${thumb + 7}h14M${x + 5} ${thumb + 12}h14M${x + 5} ${thumb + 17}h14M${x + 5} ${thumb + 22}h14`} stroke="#444" strokeWidth="1.5" />
  </g>
);

const HSwitch = ({ x, y, w }: { x: number; y: number; w: number }) => (
  <g>
    <rect x={x} y={y} width={w} height="25" fill="#b0b0b6" />
    <path d={`M${x} ${y + 1}H${x + w}`} stroke="#111" strokeWidth="1.5" />
    <rect x={x + 30} y={y + 11} width={w - 38} height="5" fill="#000" />
    <rect x={x} y={y} width="32" height="25" fill="#c4c4c4" stroke="#666" />
    <path d={`M${x + 6} ${y + 5}v15M${x + 11} ${y + 5}v15M${x + 16} ${y + 5}v15M${x + 21} ${y + 5}v15M${x + 26} ${y + 5}v15`} stroke="#444" strokeWidth="1.5" />
  </g>
);

const Btn = ({ x, y, on }: { x: number; y: number; on?: boolean }) => (
  <g>
    <rect x={x} y={y} width="29" height="28" fill={on ? "url(#btnon)" : "url(#btn)"} />
    <path d={`M${x} ${y + 28}H${x + 29}`} stroke="#111" strokeWidth="1.5" />
  </g>
);

const DoubleArrow = ({ x, y, color }: { x: number; y: number; color: string }) => (
  <g fill={color} stroke={color}>
    <path d={`M${x} ${y}l6.5 14h-13zM${x} ${y + 43}l6.5-14h-13z`} />
    <path d={`M${x} ${y + 10}v24`} strokeWidth="1.2" />
  </g>
);

const Lbl = ({ t, x, y, size = 16, end = true, color = "#111" }: { t: string; x: number; y: number; size?: number; end?: boolean; color?: string }) => (
  <text x={x} y={y + size * 0.36} fontSize={size} fontWeight="700" textAnchor={end ? "end" : "middle"} fill={color}>{t}</text>
);

const Dial = ({
  cx,
  cy,
  labels,
  color,
  outer,
  inner,
  left,
  right,
  value,
}: {
  cx: number;
  cy: number;
  labels: Lab[];
  color: string;
  outer: number;
  inner: number;
  left: string;
  right: string;
  value: string;
}) => (
  <g>
    <path d={`M4.5 364V${cy}A88 87 0 0 1 ${cx + 43} ${cy - 76}L${cx} ${cy}L53.5 ${cy + 50}V364z`} fill="#fff" stroke="#333" strokeWidth="0.8" />
    <path d={`M${cx + 50} ${cy - 71}A88 87 0 0 1 181 ${cy}V364H131V${cy + 50}L${cx} ${cy}z`} fill="#fff" stroke="#333" strokeWidth="0.8" />
    {labels.map(([t, lx, ly]) => {
      const dx = lx - cx;
      const dy = ly - cy;
      const len = Math.sqrt(dx * dx + dy * dy);
      return (
        <g key={t + lx}>
          <path d={`M${cx + (dx / len) * 58} ${cy + (dy / len) * 58}L${cx + (dx / len) * 66} ${cy + (dy / len) * 66}`} stroke="#222" strokeWidth="0.8" />
          <text x={lx} y={ly + 5} fontSize="15" textAnchor="middle" fill="#222">{t}</text>
        </g>
      );
    })}
    <circle cx={cx} cy={cy} r="60" fill="#d8d8d8" />
    <circle cx={cx} cy={cy} r="58" fill="url(#knob)" />
    <circle cx={cx} cy={cy} r="32" fill="#c8c8c8" />
    <circle cx={cx} cy={cy} r="28" fill="url(#cap)" stroke="#555" strokeWidth="3" />
    <path transform={`rotate(${outer} ${cx} ${cy})`} d={`M${cx + 43} ${cy - 12}V${cy + 12}L${cx + 53} ${cy}z`} fill={color} />
    <path transform={`rotate(${inner} ${cx} ${cy})`} d={`M${cx + 20} ${cy - 7}V${cy + 7}L${cx + 29} ${cy}z`} fill={color} />
    <rect x="58" y="337" width="69" height="25" fill="#fff" />
    <path d="M58 362V338H127" fill="none" stroke="#111" strokeWidth="2" />
    <path d="M59 361H127V339" fill="none" stroke="#ccc" strokeWidth="1.5" />
    <text x="61" y="356" fontSize="20" fill="#20208a">{value}</text>
    <text x={28} y="355" fontSize="20" textAnchor="middle" fill="#222">{left}</text>
    <text x={157} y="355" fontSize="20" textAnchor="middle" fill="#222">{right}</text>
  </g>
);

const chLabels: Lab[] = [
  ["0.5", 63, 203], ["0.2", 94, 197], ["0.1", 120, 203], ["1", 36.6, 222], ["2", 20, 248], ["5", 14, 275], ["10", 16.6, 304.5], ["20", 33, 328],
  ["50", 148, 221], ["20", 165.5, 247], ["10", 170, 275], ["5", 164, 304], ["2", 147.5, 330],
];

const hLabels: Lab[] = [
  ["0.5", 82, 195], ["0.2", 103, 195], ["0.1", 121, 205], ["1", 62, 204], ["2", 43, 214], ["5", 28, 231], ["10", 16, 251], ["20", 15, 271], ["50", 14, 294], ["100", 18, 314], ["200", 36, 334],
  ["50", 144, 219], ["20", 161, 232], ["10", 166, 252], ["5", 171, 273], ["2", 170, 294], ["1", 164, 316], ["0.5", 149, 333],
];

const BodySvg = ({ children }: { children: ReactNode }) => (
  <svg viewBox="0 0 184 364" className="block w-full h-full font-['Liberation_Sans']" preserveAspectRatio="none">
    {children}
  </svg>
);

const Channel = ({
  id,
  color,
  drum,
  thumb,
  outer,
  inner,
  value,
  bothBtns,
}: {
  id: string;
  color: string;
  drum: Lab[];
  thumb: number;
  outer: number;
  inner: number;
  value: string;
  bothBtns: boolean;
}) => (
  <BodySvg>
    <Lbl t="Position" x={56} y={13} size={16} end={false} />
    <Drum id={id} x={20} y={23} labels={drum} />
    <DoubleArrow x={10} y={79} color={color} />
    <Lbl t="AC" x={146} y={25} />
    <Lbl t="DC" x={146} y={51} />
    <Lbl t="GND" x={146} y={79} />
    <Lbl t="OFF" x={146} y={106} />
    <VSwitch x={152} y={3} h={124} thumb={thumb} slotH={102} />
    <Lbl t="Invert" x={147} y={147} />
    <Btn x={152} y={133} />
    <Lbl t="A+B" x={147} y={180} />
    {bothBtns && <Btn x={152} y={166} />}
    <Dial cx={92.5} cy={275} labels={chLabels} color={color} outer={outer} inner={inner} left="V" right="mV" value={value} />
  </BodySvg>
);

const Trigger = () => (
  <BodySvg>
    <Lbl t="Level" x={60} y={12} size={16} end={false} />
    <Drum id="trg" x={21} y={23} labels={[["-10", 60, 61], ["0", 61, 100], ["10", 61, 140]]} />
    <DoubleArrow x={10.5} y={79} color="#f09aa8" />
    <Lbl t="AC" x={149} y={23} />
    <Lbl t="DC" x={149} y={49} />
    <VSwitch x={153} y={3} h={64} thumb={35} slotH={22} />
    <path d="M147 101h-9v20h-9M129 131h9v21h9" fill="none" stroke="#000" strokeWidth="2" />
    <VSwitch x={153} y={93} h={64} thumb={126} slotH={22} />
    <Lbl t="Auto" x={148} y={200} />
    <Btn x={152} y={186} on />
    <Lbl t="One-Shot" x={148} y={230} />
    <Btn x={152} y={217} />
    <Lbl t="Cursors" x={148} y={263} />
    <Btn x={152} y={249} />
    <Lbl t="Source" x={91} y={301} end={false} />
    <Lbl t="A" x={50} y={324} size={18} end={false} color="#ffff20" />
    <Lbl t="B" x={80} y={324} size={18} end={false} color="#1a9bc8" />
    <Lbl t="C" x={109} y={324} size={18} end={false} color="#e8207f" />
    <Lbl t="D" x={137} y={324} size={18} end={false} color="#10a050" />
    <HSwitch x={29} y={336} w={123} />
  </BodySvg>
);

const Horizontal = () => (
  <BodySvg>
    <Lbl t="Source" x={90} y={17} end={false} />
    <path d="M24 42l22-11v11" fill="none" stroke="#e8801a" strokeWidth="2" />
    <Lbl t="A" x={63} y={36} size={18} end={false} color="#ffff20" />
    <Lbl t="B" x={92} y={36} size={18} end={false} color="#1a9bc8" />
    <Lbl t="C" x={122} y={36} size={18} end={false} color="#e8207f" />
    <Lbl t="D" x={150} y={36} size={18} end={false} color="#10a050" />
    <HSwitch x={15} y={49} w={153} />
    <Lbl t="Position" x={90} y={93} size={16} end={false} />
    <rect x="15" y="107" width="159" height="77" fill="#a8a8a8" stroke="#111" strokeWidth="2" />
    <rect x="18" y="119" width="150" height="52" fill="url(#drumh)" />
    <path d="M18 172H168" stroke="#111" strokeWidth="2" />
    <path d="M30 119v6M40 119v6M50 119v6M60 119v10M70 119v6M80 119v6M90 119v10M100 119v6M110 119v6M120 119v10M130 119v6M140 119v6M150 119v6M30 171v-6M40 171v-6M50 171v-6M60 171v-10M70 171v-6M80 171v-6M90 171v-10M100 171v-6M110 171v-6M120 171v-10M130 171v-6M140 171v-6" stroke="#222" strokeWidth="0.8" />
    <text x="90" y="151" fontSize="20" textAnchor="middle" fill="#111">-790-800-810</text>
    <path d="M81 109h18l-9 9zM81 181h18l-9-9z" fill="#ff0000" />
    <Dial cx={93} cy={274} labels={hLabels} color="#e8801a" outer={-84} inner={5} left="mS" right="MS" value="0.25m" />
  </BodySvg>
);

const Panel = ({ title, color, children }: { title: string; color: string; children: ReactNode }) => (
  <div className="flex flex-col gap-[3px] h-[418px]">
    <div className="h-[50px] pt-[3px] flex items-center justify-center bg-[#a2a2aa] border-2 border-dotted border-[#d0d0d0] text-[24px] font-bold font-['Liberation_Sans'] leading-none">
      <span style={{ color }}>{title}</span>
    </div>
    <div className="flex-1 min-h-0 bg-[#a2a2aa] border border-[#d0d0d0]">{children}</div>
  </div>
);

const Oscilloscope = () => {
  const cols = Array.from({ length: 19 }, (_, i) => 40.1 * (i + 1));
  const rows = Array.from({ length: 19 }, (_, i) => 40.05 * (i + 1));
  return (
    <div className="absolute left-[1349px] top-[699px] w-[1378px] h-[893px] flex flex-col bg-white shadow-[0_2px_6px_rgba(0,0,0,0.35)] border-b-2 border-[#30303c]">
      <div className="h-[48px] flex-none flex items-center justify-between pl-[4px] bg-white">
        <span className="text-[24px] leading-none mb-[2px] text-[#999] font-['Noto_Sans']">Digital Oscilloscope</span>
        <div className="w-[41px] h-[40px] self-start mt-[1px] flex items-center justify-center bg-[#e6e6e6]">
          <svg width="12" height="12" viewBox="0 0 12 12"><path d="M1 1l10 10M11 1L1 11" stroke="#fff" strokeWidth="1.5" /></svg>
        </div>
      </div>
      <div className="flex flex-1 min-h-0">
        <div className="w-[812px] flex flex-col">
          <div className="ml-[2px] w-[810px] h-[810px] flex-none border-2 border-[#c8c8c8] border-t-[#30303c] border-l-[#30303c] p-[2px] bg-[#c8c8c8]">
            <svg viewBox="0 0 802 801" className="block w-full h-full bg-black">
              {cols.map((x) => (
                <path key={x} d={`M${x} 0V801`} stroke="#10421a" strokeWidth="1" />
              ))}
              {rows.map((y) => (
                <path key={y} d={`M0 ${y}H802`} stroke="#10421a" strokeWidth="1" />
              ))}
              <path d="M0 390H19V198H183V390H346.5V198H510V390H674V198H802" fill="none" stroke="#ffff30" strokeWidth="1.2" />
              <path d="M0 628H802" stroke="#29a3d9" strokeWidth="1.5" />
            </svg>
          </div>
          <div className="mt-[2px] ml-[1px] h-[31px] relative flex items-center justify-between px-[14px] bg-[#f0f0f0]">
            <svg width="10" height="16" viewBox="0 0 10 16"><path d="M8 2L2 8l6 6" fill="none" stroke="#555" strokeWidth="2.5" /></svg>
            <div className="absolute left-[583px] top-0 w-[35px] h-full bg-[#cdcdcd]" />
            <svg width="10" height="16" viewBox="0 0 10 16"><path d="M2 2l6 6-6 6" fill="none" stroke="#555" strokeWidth="2.5" /></svg>
          </div>
        </div>
        <div className="flex-1 bg-[#30303c] pl-[4px] grid grid-cols-[185px_183px_184px] gap-x-[4px] gap-y-[5px] content-start">
          <Panel title="Trigger" color="#f09aa8"><Trigger /></Panel>
          <Panel title="Channel A" color="#ffff20">
            <Channel id="cha" color="#ffff20" drum={[["0", 60, 61], ["10", 60, 100], ["20", 60, 140]]} thumb={35} outer={-135} inner={45} value="1" bothBtns />
          </Panel>
          <Panel title="Channel C" color="#e8107f">
            <Channel id="chc" color="#e0107a" drum={[["0", 60, 22], ["10", 60, 69], ["20", 60, 109], ["30", 60, 149]]} thumb={95} outer={180} inner={42} value="5.46" bothBtns />
          </Panel>
          <Panel title="Horizontal" color="#e8801a"><Horizontal /></Panel>
          <Panel title="Channel B" color="#1a9be8">
            <Channel id="chb" color="#1a93e0" drum={[["-240", 60, 53], ["-230", 60, 93], ["-220", 60, 133], ["-210", 60, 173]]} thumb={35} outer={-135} inner={45} value="1" bothBtns={false} />
          </Panel>
          <Panel title="Channel D" color="#109e4a">
            <Channel id="chd" color="#0f9e45" drum={[["-10", 60, 29], ["0", 60, 69], ["10", 60, 108], ["20", 60, 149]]} thumb={95} outer={180} inner={42} value="5" bothBtns={false} />
          </Panel>
        </div>
      </div>
    </div>
  );
};

const StatusBar = () => (
  <div className="h-[48px] flex items-start gap-[5px] bg-white font-['Liberation_Sans'] text-[22px] leading-none">
    <div className="w-[418px] h-[46px] flex items-center pl-[21px] bg-gradient-to-b from-[#e2effa] to-[#b2d3e9]">
      <svg width="31" height="31" viewBox="0 0 31 31"><path d="M0 1l31 14.5L0 30z" fill="#0a3ae0" /></svg>
      <svg width="31" height="31" viewBox="0 0 31 31" className="ml-[21px]">
        <rect x="0" y="1" width="5" height="29" fill="#0a3ae0" />
        <path d="M9 1l22 14.5L9 30z" fill="#0a3ae0" />
      </svg>
      <svg width="22" height="32" viewBox="0 0 22 32" className="ml-[26px]">
        <rect x="0" y="2" width="9" height="28" fill="#f7bc50" stroke="#b08030" />
        <rect x="13" y="2" width="9" height="28" fill="#f7bc50" stroke="#b08030" />
      </svg>
      <div className="ml-[25px] w-[32px] h-[31px] bg-gradient-to-b from-[#0a55c0] to-[#0a0af0]" />
      <div className="ml-[13px] w-[1px] h-[38px] bg-[#8fb3cc]" />
      <svg width="30" height="27" viewBox="0 0 30 27" className="ml-[13px]">
        <path d="M15 0l15 27H0z" fill="#f5a800" />
        <path d="M15 8v10M15 20v4" stroke="#111" strokeWidth="3.5" />
      </svg>
      <span className="ml-[12px] whitespace-nowrap text-black">6 Message(s)</span>
    </div>
    <div className="w-[412px] h-[46px] flex items-center pl-[13px] bg-gradient-to-b from-[#e2effa] to-[#b2d3e9] text-[#7a4a10]">
      PAUSED: 00:00:32.318550
    </div>
    <div className="flex-1 h-[46px] flex items-center pl-[19px] bg-gradient-to-b from-[#e2effa] to-[#b2d3e9] text-black">
      <span className="w-[47px]">x:</span>
      <span className="w-[95px]">+3950.0</span>
      <span className="w-[63px]">y:</span>
      <span className="w-[1804px]">-950.0</span>
      <span>th</span>
    </div>
  </div>
);

export default function App() {
  return (
    <div className="relative w-[2880px] h-[1800px] overflow-hidden flex flex-col bg-[#e3ebf3] font-['Noto_Sans','Noto_Sans_CJK_SC',sans-serif]">
      <GlobalDefs />
      <TitleBar />
      <MenuBar />
      <Toolbar />
      <TabBar />
      <div className="h-[7px] border-t-2 border-[#6f9dc0] bg-[#a9cbe3]" />
      <div className="h-[1566px] flex bg-[#bcd3e4]">
        <LeftRail />
        <Gallery />
        <div className="w-[4px] bg-[#c9d6e0]" />
        <div className="flex-1 mr-[4px] mb-[2px] border-l border-t border-r border-[#666]">
          <Schematic />
        </div>
      </div>
      <StatusBar />
      <Oscilloscope />
    </div>
  );
}
